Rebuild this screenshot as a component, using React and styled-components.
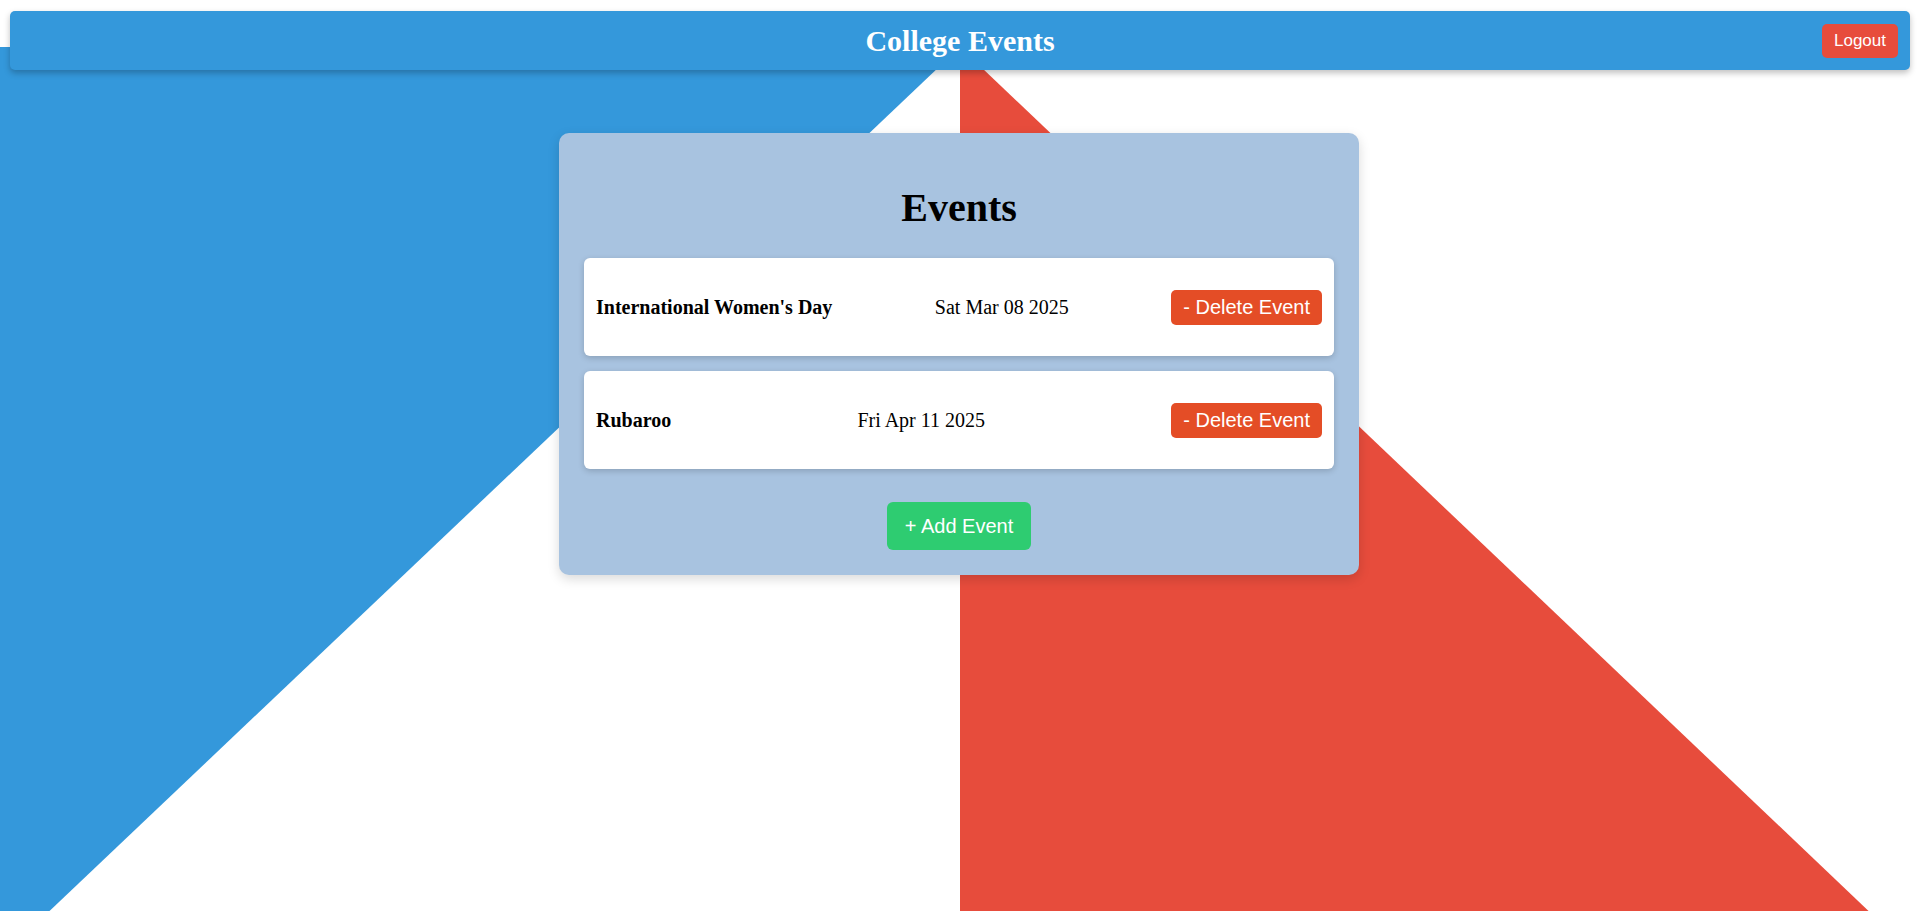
import styled, { createGlobalStyle } from "styled-components";

const GlobalStyle = createGlobalStyle`
  html, body {
    margin: 0;
    padding: 0;
    background: #ffffff;
    font-family: "Liberation Serif", "Times New Roman", serif;
  }
  * { box-sizing: border-box; }
`;

const Page = styled.div`
  position: relative;
  height: 100vh;
  overflow: hidden;
  padding-top: 11px;
`;

// decorative split background under everything
const Backdrop = styled.div`
  position: absolute;
  top: 47px;
  left: 0;
  width: 100%;
  height: 100vh;
  z-index: 0;

  &::before,
  &::after {
    content: "";
    position: absolute;
    inset: 0;
  }
  &::before {
    background: #3498db;
    clip-path: polygon(0 0, calc(50% + 1px) 0, 0 100%);
  }
  &::after {
    background: #e74c3c;
    clip-path: polygon(calc(50% + 1px) 0, 100% 100%, calc(50% + 1px) 100%);
  }
`;

const Header = styled.header`
  position: relative;
  z-index: 2;
  margin: 0 8px 0 10px;
  height: 59px;
  background: #3498db;
  border-radius: 5px;
  box-shadow: 0 3px 6px rgba(0, 0, 0, 0.25);
  display: grid;
  grid-template-columns: 1fr auto 1fr;
  align-items: center;
`;

const Brand = styled.h1`
  grid-column: 2;
  margin: 0;
  color: #ffffff;
  font-size: 30px;
  font-weight: bold;
`;

const Button = styled.button`
  border: none;
  color: #ffffff;
  font-family: "Liberation Sans", Arial, sans-serif;
  font-size: ${(p) => p.$size || 20}px;
  padding: ${(p) => p.$pad || "6px 12px"};
  background: ${(p) => p.$bg};
  border-radius: ${(p) => p.$radius || 5}px;
  cursor: pointer;
  line-height: normal;
`;

const LogoutButton = styled(Button)`
  grid-column: 3;
  justify-self: end;
  margin-right: 12px;
`;

const Card = styled.main`
  position: relative;
  z-index: 1;
  width: 800px;
  margin: 63px auto 0;
  padding: 25px;
  background: #a8c3e0;
  border-radius: 10px;
  box-shadow: 0 4px 12px rgba(0, 0, 0, 0.15);
  display: flex;
  flex-direction: column;
  align-items: stretch;
`;

const Title = styled.h2`
  margin: 27px 0 27px;
  text-align: center;
  font-size: 40px;
  font-weight: bold;
  line-height: 46px;
  color: #000000;
`;

const List = styled.div`
  display: flex;
  flex-direction: column;
  gap: 15px;
`;

const Row = styled.div`
  display: flex;
  justify-content: space-between;
  align-items: center;
  padding: 31.5px 12px;
  background: #ffffff;
  border-radius: 6px;
  box-shadow: 0 2px 6px rgba(0, 0, 0, 0.18);
`;

const EventName = styled.span`
  font-size: 20px;
  font-weight: bold;
  color: #000000;
`;

const EventDate = styled.span`
  font-size: 20px;
  color: #000000;
`;

const Footer = styled.div`
  display: flex;
  justify-content: center;
  margin-top: 33px;
`;

const events = [
  { name: "International Women's Day", date: "Sat Mar 08 2025" },
  { name: "Rubaroo", date: "Fri Apr 11 2025" },
];

export default function App() {
  return (
    <>
      <GlobalStyle />
      <Page>
        <Backdrop />
        <Header>
          <Brand>College Events</Brand>
          <LogoutButton $bg="#e74c3c" $size={17} $pad="7px 12px">
            Logout
          </LogoutButton>
        </Header>
        <Card>
          <Title>Events</Title>
          <List>
            {events.map((ev) => (
              <Row key={ev.name}>
                <EventName>{ev.name}</EventName>
                <EventDate>{ev.date}</EventDate>
                <Button $bg="#e44d26">- Delete Event</Button>
              </Row>
            ))}
          </List>
          <Footer>
            <Button $bg="#2ecc71" $pad="12.5px 18px" $radius={6}>
              + Add Event
            </Button>
          </Footer>
        </Card>
      </Page>
    </>
  );
}
